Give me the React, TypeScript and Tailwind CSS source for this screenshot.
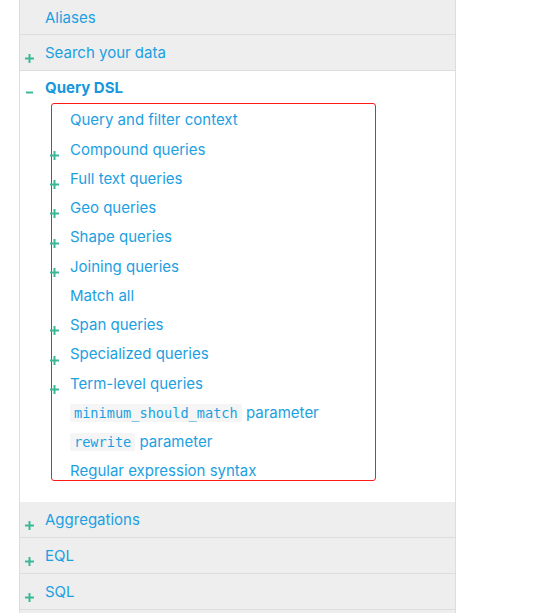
const font = { fontFamily: "Inter, 'Noto Sans', sans-serif" };

type Item = { label: React.ReactNode; plus?: boolean };

function Plus({ className = "" }: { className?: string }) {
  return (
    <svg width="9" height="9" viewBox="0 0 9 9" className={className}>
      <path d="M4.5 0v9M0 4.5h9" stroke="#3cb898" strokeWidth="2" />
    </svg>
  );
}

function Minus({ className = "" }: { className?: string }) {
  return (
    <svg width="9" height="9" viewBox="0 0 9 9" className={className}>
      <path d="M1 4.5h7" stroke="#3cb898" strokeWidth="2" />
    </svg>
  );
}

function Code({ children }: { children: string }) {
  return (
    <code className="bg-[#f5f5f5] px-[4px] py-[1px] text-[13.6px] font-['DejaVu_Sans_Mono',monospace] rounded-[2px]">
      {children}
    </code>
  );
}

function GrayRow({ label, plus = true, h = "h-[36px]" }: { label: string; plus?: boolean; h?: string }) {
  return (
    <div className={`flex items-center ${h} bg-[#eeeeee] border-b border-[#dddddd]`}>
      <div className="w-[25px] pl-[5px] flex items-center h-full">
        {plus && <Plus className="mt-[12px]" />}
      </div>
      <span className="text-[15px] text-[#1ba0e2] mt-[2px]">{label}</span>
    </div>
  );
}

const items: Item[] = [
  { label: "Query and filter context" },
  { label: "Compound queries", plus: true },
  { label: "Full text queries", plus: true },
  { label: "Geo queries", plus: true },
  { label: "Shape queries", plus: true },
  { label: "Joining queries", plus: true },
  { label: "Match all" },
  { label: "Span queries", plus: true },
  { label: "Specialized queries", plus: true },
  { label: "Term-level queries", plus: true },
  {
    label: (
      <>
        <Code>minimum_should_match</Code> parameter
      </>
    ),
  },
  {
    label: (
      <>
        <Code>rewrite</Code> parameter
      </>
    ),
  },
  { label: "Regular expression syntax" },
];

export default function App() {
  return (
    <div className="w-[540px] h-[613px] bg-white overflow-hidden" style={font}>
      <div className="ml-[19px] w-[437px] border-x border-[#dddddd] min-h-[613px]">
        <GrayRow label="Aliases" plus={false} h="h-[35px]" />
        <GrayRow label="Search your data" />
        <div className="bg-white pb-[21px]">
          <div className="flex items-center h-[32px]">
            <div className="w-[25px] pl-[5px] flex items-center h-full">
              <Minus className="mt-[10px]" />
            </div>
            <span className="text-[15px] font-bold text-[#1897dc] mt-[2px]">Query DSL</span>
          </div>
          <div className="ml-[31px] w-[325px] h-[378px] border border-[#ff1a1a] rounded-[3px] pt-[2px]">
            {items.map((it, i) => (
              <div key={i} className="flex items-center h-[29.25px]">
                <div className="w-[20px] ml-[-2px] flex items-center h-full">
                  {it.plus && <Plus className="mt-[11px]" />}
                </div>
                <span className="text-[15px] text-[#1ba0e2] whitespace-nowrap">{it.label}</span>
              </div>
            ))}
          </div>
        </div>
        <GrayRow label="Aggregations" />
        <GrayRow label="EQL" />
        <GrayRow label="SQL" />
        <div className="h-[20px] bg-[#eeeeee]" />
      </div>
    </div>
  );
}
